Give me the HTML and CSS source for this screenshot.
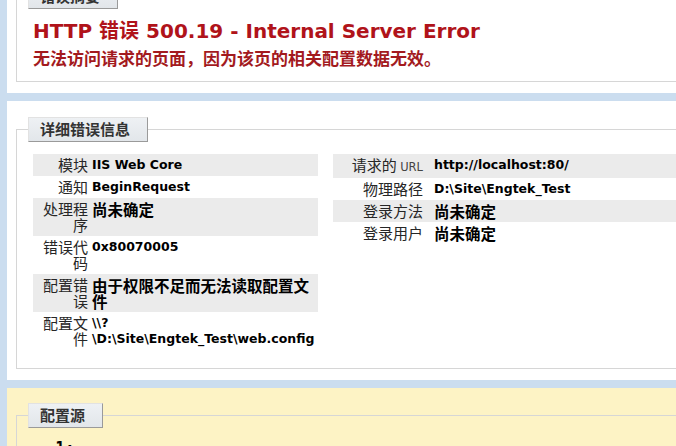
FILE: index.html
```html
<!DOCTYPE html>

<html>

<head>
    <title>IIS 7.5 详细错误 - 500.19 - Internal Server Error</title>
    <link rel="stylesheet" href="styles.css">
</head>

<body>
    <div class="panel summary">
        <div class="fieldset">
            <div class="legend">错误摘要</div>
            <h3>HTTP 错误 500.19 - Internal Server Error</h3>
            <h4>无法访问请求的页面，因为该页的相关配置数据无效。</h4>
        </div>
    </div>

    <div class="panel">
        <div class="fieldset">
            <div class="legend">详细错误信息</div>
            <div class="details">
                <div class="details-left">
                    <table>
                        <tr class="alt"><th>模块</th><td>IIS Web Core</td></tr>
                        <tr><th>通知</th><td>BeginRequest</td></tr>
                        <tr class="alt"><th>处理程序</th><td class="cn">尚未确定</td></tr>
                        <tr><th>错误代码</th><td>0x80070005</td></tr>
                        <tr class="alt"><th>配置错误</th><td class="cn">由于权限不足而无法读取配置文件</td></tr>
                        <tr><th>配置文件</th><td class="path">\\?<br>\D:\Site\Engtek_Test\web.config</td></tr>
                    </table>
                </div>
                <div class="details-right">
                    <table>
                        <tr class="alt"><th>请求的 <span class="url">URL</span></th><td>http://localhost:80/</td></tr>
                        <tr><th>物理路径</th><td>D:\Site\Engtek_Test</td></tr>
                        <tr class="alt"><th>登录方法</th><td class="cn">尚未确定</td></tr>
                        <tr><th>登录用户</th><td class="cn">尚未确定</td></tr>
                    </table>
                </div>
            </div>
        </div>
    </div>

    <div class="panel config-source">
        <div class="fieldset">
            <div class="legend">配置源</div>
            <pre>  1:</pre>
        </div>
    </div>
</body>

</html>
```

FILE: styles.css
```css
html {
    overflow: hidden;
}

body {
    margin: 0;
    background: #cbddef;
    font-family: "DejaVu Sans", "Noto Sans CJK SC", sans-serif;
    color: #000;
}

.panel {
    margin: 0 0 8px 7px;
    padding: 28px 0 11px 9px;
    background: #fff;
    overflow: hidden;
}

.summary {
    margin-top: -32px;
}

.config-source {
    background: #fdf3c5;
    padding-top: 27px;
    padding-bottom: 60px;
}

.fieldset {
    border: 1px solid #d6d6d6;
    margin-right: -40px;
    padding: 0 16px 11px 16px;
}

.legend {
    width: fit-content;
    margin: -13px 0 0 -5px;
    padding: 3px 17px 5px 11px;
    border-top: 1px solid #e2e2e2;
    border-left: 1px solid #e2e2e2;
    border-right: 1px solid #9a9a9a;
    border-bottom: 1px solid #9a9a9a;
    background: linear-gradient(#eef1f4, #e2e6ea);
    color: #333;
    font-family: "Noto Sans CJK SC", sans-serif;
    font-size: 15px;
    font-weight: bold;
    line-height: 15px;
}

h3 {
    margin: 10px 0 0 0;
    color: #b0131a;
    font-size: 20px;
    line-height: 24px;
    font-weight: bold;
}

h4 {
    margin: 3px 0 0 0;
    color: #a31a1e;
    font-family: "Noto Sans CJK SC", sans-serif;
    font-size: 17px;
    line-height: 24px;
    font-weight: bold;
}

.details {
    display: flex;
    gap: 15px;
    margin: 12px 0 7px 0;
}

.details-right {
    flex: 1;
}

table {
    border-collapse: collapse;
    table-layout: fixed;
}

.details-left table {
    width: 285px;
}

.details-right table {
    width: 100%;
}

th,
td {
    padding: 3px 0;
    vertical-align: top;
    text-align: left;
    line-height: 16px;
}

th {
    padding-right: 4px;
    text-align: right;
    font-family: "Noto Sans CJK SC", sans-serif;
    font-size: 15px;
    font-weight: normal;
    color: #262626;
}

.details-left th {
    width: 55px;
}

.details-right th {
    width: 90px;
    padding-right: 11px;
}

td {
    font-size: 12.5px;
    font-weight: bold;
}

td.cn {
    font-family: "Noto Sans CJK SC", sans-serif;
    font-size: 15.5px;
}

td.path {
    white-space: nowrap;
}

tr.alt th,
tr.alt td {
    background-color: #ebebeb;
}

.url {
    font-family: "DejaVu Sans", sans-serif;
    font-size: 11.5px;
    color: #444;
}

pre {
    margin: 10px 0 0 3px;
    font-family: "DejaVu Sans Mono", monospace;
    font-size: 16px;
    font-weight: bold;
    line-height: 20px;
}
```
